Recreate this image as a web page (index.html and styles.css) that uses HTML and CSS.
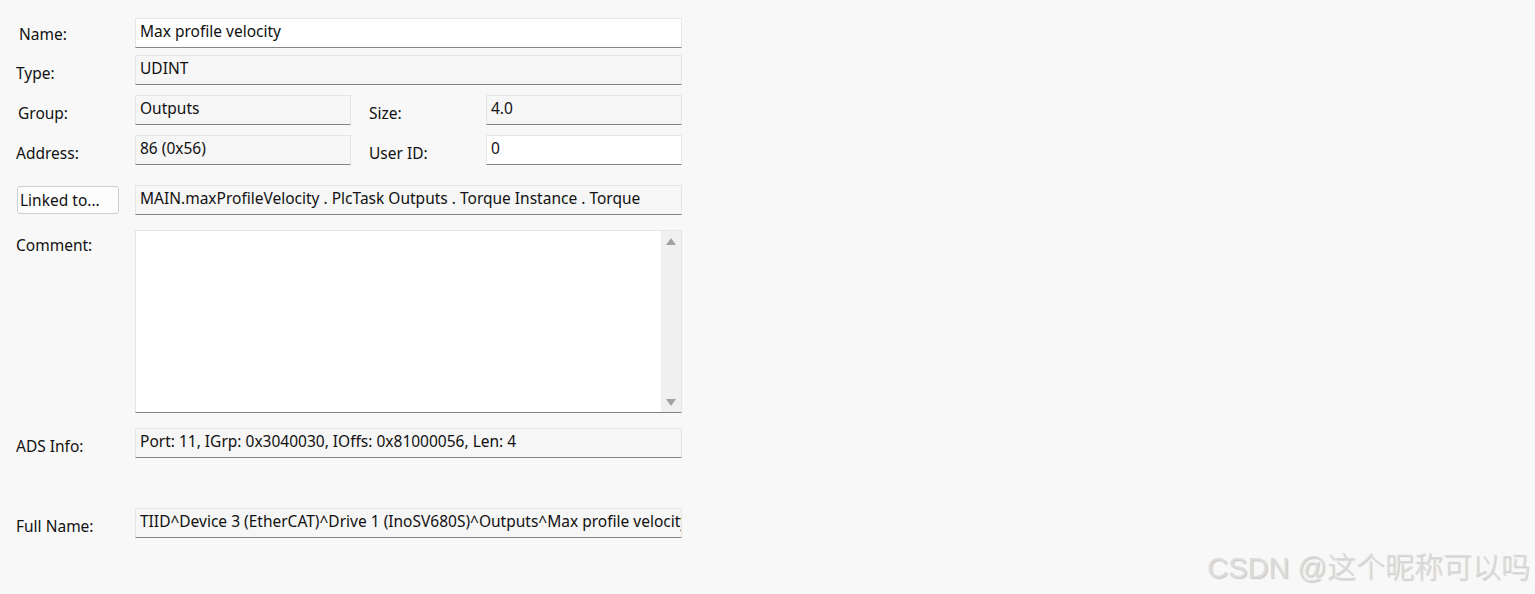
FILE: index.html
```html
<!DOCTYPE html>
<html>
<head>
<meta charset="utf-8">
<link rel="stylesheet" href="styles.css">
</head>
<body>
<div class="form">
  <div class="row r-name">
    <div class="label l-name">Name:</div>
    <div class="field white wide">Max profile velocity</div>
  </div>
  <div class="row r-type">
    <div class="label">Type:</div>
    <div class="field wide">UDINT</div>
  </div>
  <div class="row r-group">
    <div class="label l-group">Group:</div>
    <div class="field half">Outputs</div>
    <div class="label label2">Size:</div>
    <div class="field small">4.0</div>
  </div>
  <div class="row r-addr">
    <div class="label">Address:</div>
    <div class="field half">86 (0x56)</div>
    <div class="label label2">User ID:</div>
    <div class="field small white">0</div>
  </div>
  <div class="row r-linked">
    <div class="btncell"><button class="btn">Linked to...</button></div>
    <div class="field wide">MAIN.maxProfileVelocity . PlcTask Outputs . Torque Instance . Torque</div>
  </div>
  <div class="row r-comment">
    <div class="label l-comment">Comment:</div>
    <div class="textarea wide">
      <div class="ta-body"></div>
      <div class="scrollbar">
        <span class="arrow up"></span>
        <span class="arrow down"></span>
      </div>
    </div>
  </div>
  <div class="row r-ads">
    <div class="label">ADS Info:</div>
    <div class="field wide">Port: 11, IGrp: 0x3040030, IOffs: 0x81000056, Len: 4</div>
  </div>
  <div class="row r-full">
    <div class="label">Full Name:</div>
    <div class="field wide clip">TIID^Device 3 (EtherCAT)^Drive 1 (InoSV680S)^Outputs^Max profile velocity</div>
  </div>
</div>
<div class="watermark">CSDN @这个昵称可以吗</div>
</body>
</html>
```

FILE: styles.css
```css
html, body {
  margin: 0;
  padding: 0;
  background: #f8f8f8;
  font-family: "Noto Sans", "Open Sans", "Noto Sans CJK SC", sans-serif;
  font-size: 15.5px;
  color: #111;
}
body {
  width: 1535px;
  height: 594px;
  overflow: hidden;
  position: relative;
}
.form {
  padding: 18px 0 0 16px;
}
.row {
  display: flex;
  align-items: flex-start;
}
.r-type { margin-top: 7px; }
.r-group { margin-top: 10px; }
.r-addr { margin-top: 10px; }
.r-linked { margin-top: 20px; }
.r-comment { margin-top: 15px; }
.r-ads { margin-top: 15px; }
.r-full { margin-top: 50px; }

.label {
  width: 119px;
  flex: none;
  padding-top: 8px;
  line-height: 20px;
  white-space: nowrap;
}
.l-name { padding-top: 6px; padding-left: 3px; width: 116px; }
.l-group { padding-left: 2px; width: 117px; }
.l-comment { padding-top: 5px; }
.label2 {
  width: 117px;
  margin-left: 18px;
}
.field {
  box-sizing: border-box;
  height: 30px;
  flex: none;
  background: #f6f6f6;
  border: 1px solid #e6e6e6;
  border-bottom-color: #858585;
  padding: 2px 0 0 4px;
  line-height: 20px;
  white-space: nowrap;
  overflow: hidden;
}
.field.white { background: #ffffff; }
.wide { width: 547px; }
.half { width: 216px; }
.small { width: 196px; }
.btncell {
  width: 119px;
  flex: none;
  padding-top: 1px;
}
.btn {
  box-sizing: border-box;
  width: 102px;
  height: 28px;
  margin-left: 1px;
  background: #fdfdfd;
  border: 1px solid #cfcfcf;
  border-radius: 3px;
  font-family: inherit;
  font-size: 15.5px;
  color: #111;
  text-align: left;
  padding: 0 0 0 2px;
  line-height: 20px;
}
.textarea {
  box-sizing: border-box;
  height: 183px;
  flex: none;
  display: flex;
  background: #ffffff;
  border: 1px solid #e6e6e6;
  border-bottom-color: #858585;
}
.ta-body { flex: 1; }
.scrollbar {
  width: 20px;
  background: #f0f0f0;
  display: flex;
  flex-direction: column;
  justify-content: space-between;
  align-items: center;
  padding: 7px 0 6px;
}
.arrow {
  width: 0;
  height: 0;
  border-left: 5px solid transparent;
  border-right: 5px solid transparent;
}
.arrow.up { border-bottom: 7px solid #a3a3a3; }
.arrow.down { border-top: 7px solid #a3a3a3; }

.watermark {
  position: absolute;
  right: 5px;
  bottom: 8px;
  font-family: "Liberation Sans", "Noto Sans CJK SC", sans-serif;
  font-size: 29px;
  font-weight: 300;
  color: #dcdcdc;
  text-shadow: 1px 1px 1px #c8c8c8;
  white-space: nowrap;
}
```
